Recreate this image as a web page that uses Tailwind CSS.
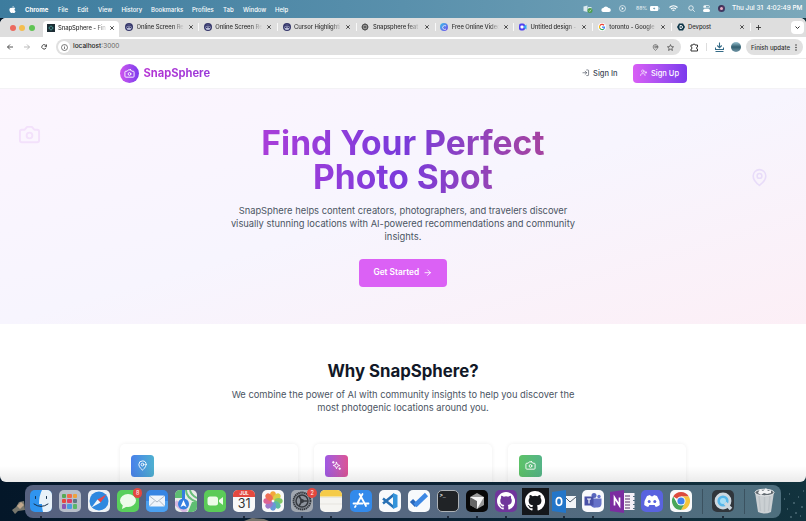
<!doctype html>
<html lang="en">
    <head>
        <meta charset="UTF-8" />
        <meta name="viewport" content="width=device-width, initial-scale=1.0" />
        <title>SnapSphere - Find Your Perfect Photo Spot</title>
        <script src="https://cdn.jsdelivr.net/npm/@tailwindcss/browser@4"></script>
    </head>

    <body class="flex h-screen w-screen flex-col overflow-hidden bg-linear-to-r from-[#041729] via-[#0a2033] to-[#12333e] font-['Inter',sans-serif]">
        <!-- Shared icons -->
        <svg class="hidden">
            <symbol id="camera" viewBox="0 0 24 24" fill="none" stroke="currentColor" stroke-width="2" stroke-linecap="round" stroke-linejoin="round">
                <path d="M14.5 4h-5L7 7H4a2 2 0 0 0-2 2v9a2 2 0 0 0 2 2h16a2 2 0 0 0 2-2V9a2 2 0 0 0-2-2h-3l-2.500-3z"></path>
                <circle cx="12" cy="13" r="3"></circle>
            </symbol>
            <symbol id="pin" viewBox="0 0 24 24" fill="none" stroke="currentColor" stroke-width="2" stroke-linecap="round" stroke-linejoin="round">
                <path d="M20 10c0 6-8 12-8 12s-8-6-8-12a8 8 0 0 1 16 0Z"></path>
                <circle cx="12" cy="10" r="3"></circle>
            </symbol>
            <symbol id="close" viewBox="0 0 8 8" fill="none" stroke="#333" stroke-width="1.700">
                <path d="m.5.5 7 7M7.500.5l-7 7"></path>
            </symbol>
            <symbol id="face" viewBox="0 0 16 16">
                <circle cx="8" cy="8" r="8" fill="#34366a"></circle>
                <path d="M3 7h10v2a5 5 0 0 1-10 0Z" fill="#b9bdd8"></path>
                <path d="M4 8h3v2H4zM9 8h3v2H9z" fill="#34366a"></path>
                <path d="M5 4h6" stroke="#8a8db8"></path>
            </symbol>
            <symbol id="octocat" viewBox="0 0 16 16">
                <path fill="#fff" d="M8 0C3.580 0 0 3.580 0 8c0 3.540 2.290 6.530 5.470 7.590.4.070.55-.17.55-.38v-1.490c-2.010.37-2.530-.49-2.690-.94-.09-.23-.48-.94-.82-1.130-.28-.15-.68-.52-.01-.53.63-.01 1.080.58 1.230.82.72 1.210 1.870.87 2.330.66.07-.52.28-.87.51-1.070-1.780-.2-3.640-.89-3.640-3.950 0-.87.31-1.590.82-2.150-.08-.2-.36-1.020.08-2.120 0 0 .67-.21 2.200.82a7.600 7.600 0 0 1 4 0c1.530-1.040 2.200-.82 2.200-.82.44 1.100.16 1.920.08 2.120.51.56.82 1.270.82 2.150 0 3.070-1.870 3.750-3.650 3.950.29.25.54.73.54 1.480v2.200c0 .21.15.46.55.38A8 8 0 0 0 8 0Z"></path>
            </symbol>
        </svg>

        <!-- Menu bar -->
        <div class="flex h-[18px] shrink-0 items-center bg-linear-to-r from-[#3d7c9e] via-[#5990ac] to-[#7ba8ba] pl-[9px] text-[6px] font-medium whitespace-nowrap text-white">
            <svg class="mr-[9px] h-[7px] w-[7px]" viewBox="0 0 16 18" fill="#fff">
                <path d="M11 0c.1 1.900-1.500 4-3.400 4C7.400 2.200 9 .2 11 0ZM8 5c.8 0 2-.9 3.600-.9 1.600 0 2.900.8 3.600 1.900-3.200 1.900-2.600 6.200.6 7.400C15 15.600 13.300 18 11.700 18c-1.400 0-1.900-.8-3.500-.8S6 18 4.700 18C2.600 18 0 13.500 0 9.900 0 6.300 2.300 4.200 4.600 4.200 6.100 4.200 7.200 5 8 5Z"></path>
            </svg>
            <span class="w-[33px] font-bold">Chrome</span>
            <span class="w-[19.500px]">File</span>
            <span class="w-[20.500px]">Edit</span>
            <span class="w-[23.500px]">View</span>
            <span class="w-[29.500px]">History</span>
            <span class="w-[41px]">Bookmarks</span>
            <span class="w-[31px]">Profiles</span>
            <span class="w-[20px]">Tab</span>
            <span class="w-[32px]">Window</span>
            <span>Help</span>
            <div class="mr-[8px] ml-auto flex items-center">
                <svg class="mr-[8px] h-[8px] w-[10px]" viewBox="0 0 20 16"><path d="M1 3 9 1v13L1 12ZM10 4h7v8h-7z" fill="#dce9ee"></path><circle cx="14" cy="11" r="5" fill="#4c9d4d"></circle><path d="m12 11 1.500 2 3-4" stroke="#fff" fill="none"></path></svg>
                <svg class="mr-[8px] h-[6px] w-[10px]" viewBox="0 0 20 12" fill="#fff"><path d="M5 12a4 4 0 0 1-.5-8A6 6 0 0 1 15 4a4 4 0 0 1 1 8Z"></path></svg>
                <svg class="mr-[10px] h-[7px] w-[7px]" viewBox="0 0 14 14"><circle cx="7" cy="7" r="6" fill="none" stroke="#fff" stroke-width="1.300"></circle><path d="m5.500 4 4 3-4 3z" fill="#fff"></path></svg>
                <span class="w-[14px] text-[5px] text-white/80">88%</span>
                <svg class="mr-[9px] h-[5px] w-[10px]" viewBox="0 0 24 12"><rect width="20" height="12" rx="3" fill="#fff"></rect><path d="M22 4v4" stroke="#cfe0e7" stroke-width="2"></path><path d="m11 2-4 5h3l-1 3 4-5h-3z" fill="#6c9db3"></path></svg>
                <svg class="mr-[10px] h-[7px] w-[9px]" viewBox="0 0 18 14" fill="none" stroke="#fff" stroke-width="2.400"><path d="M1 5a12 12 0 0 1 16 0M4 8a8 8 0 0 1 10 0M7 11q2-1.500 4 0"></path></svg>
                <svg class="mr-[8px] h-[7px] w-[7px]" viewBox="0 0 14 14" fill="none" stroke="#fff" stroke-width="1.500"><circle cx="6" cy="6" r="4.500"></circle><path d="m9.500 9.500 4 4"></path></svg>
                <svg class="mr-[8px] h-[7px] w-[7px]" viewBox="0 0 14 14"><rect x="1" y="1" width="12" height="5" rx="2.500" fill="none" stroke="#fff" stroke-width="1.300"></rect><rect y="8" width="14" height="6" rx="3" fill="#fff"></rect><circle cx="4" cy="3.500" r="2" fill="#fff"></circle></svg>
                <span class="mr-[7px] flex h-[7px] w-[7px] items-center justify-center rounded-full bg-linear-to-br from-[#20284a] via-[#52355e] to-[#233b65]"><span class="h-[3px] w-[3px] rounded-full bg-[#e7adc3]"></span></span>
                <span class="w-[66px] text-[6.400px]">Thu Jul 31&nbsp; 4:02:49 PM</span>
            </div>
        </div>

        <!-- Browser window -->
        <div class="relative flex h-[464px] shrink-0 flex-col overflow-hidden rounded-[6px] bg-white">
            <!-- Tabs -->
            <div class="flex h-[19px] shrink-0 items-center bg-[#dedede] text-[5.900px] font-medium tracking-[-0.06px] whitespace-nowrap text-[#333]">
                <div class="flex w-[43px] shrink-0 gap-[3.500px] pl-[9.500px]">
                    <span class="h-[6px] w-[6px] rounded-full bg-[#ec6a5f]"></span>
                    <span class="h-[6px] w-[6px] rounded-full bg-[#f4be4f]"></span>
                    <span class="h-[6px] w-[6px] rounded-full bg-[#5fc454]"></span>
                </div>
                <div class="mt-[3px] flex h-[16px] w-[76px] shrink-0 items-center rounded-t-[4px] bg-white pb-[2px] pl-[3.500px]">
                    <span class="mr-[3.500px] flex h-[8px] w-[8px] items-center justify-center bg-[#1d2d35]"><span class="h-[4px] w-[4px] rotate-45 border border-[#3f8785]"></span></span>
                    <span class="w-[50px] mask-r-from-75%">SnapSphere - Fin</span>
                    <svg class="ml-[1.500px] h-[4px] w-[4px]"><use href="#close"></use></svg>
                </div>
                <div class="flex w-[80.300px] shrink-0 items-center pl-[6px]">
                    <svg class="mr-[3.500px] h-[8px] w-[8px]"><use href="#face"></use></svg>
                    <span class="w-[47px] mask-r-from-75%">Online Screen Re</span>
                    <svg class="ml-[5px] h-[4px] w-[4px]"><use href="#close"></use></svg>
                    <span class="ml-auto h-[8px] w-px bg-[#f8f8f8]"></span>
                </div>
                <div class="flex w-[78.800px] shrink-0 items-center pl-[4.500px]">
                    <svg class="mr-[3.500px] h-[8px] w-[8px]"><use href="#face"></use></svg>
                    <span class="w-[47px] mask-r-from-75%">Online Screen Re</span>
                    <svg class="ml-[5px] h-[4px] w-[4px]"><use href="#close"></use></svg>
                    <span class="ml-auto h-[8px] w-px bg-[#f8f8f8]"></span>
                </div>
                <div class="flex w-[78.800px] shrink-0 items-center pl-[4.500px]">
                    <svg class="mr-[3.500px] h-[8px] w-[8px]"><use href="#face"></use></svg>
                    <span class="w-[47px] mask-r-from-80%">Cursor Highlighti</span>
                    <svg class="ml-[5px] h-[4px] w-[4px]"><use href="#close"></use></svg>
                    <span class="ml-auto h-[8px] w-px bg-[#f8f8f8]"></span>
                </div>
                <div class="flex w-[78.800px] shrink-0 items-center pl-[4.500px]">
                    <svg class="mr-[3.500px] h-[8px] w-[8px]" viewBox="0 0 16 16" fill="none" stroke="#555" stroke-width="2"><circle cx="8" cy="8" r="6"></circle><path d="m8 2 5 3v6l-5 3-5-3V5zM3 5l10 6M13 5 3 11M8 2v12"></path></svg>
                    <span class="w-[47px] mask-r-from-75%">Snapsphere feat</span>
                    <svg class="ml-[5px] h-[4px] w-[4px]"><use href="#close"></use></svg>
                    <span class="ml-auto h-[8px] w-px bg-[#f8f8f8]"></span>
                </div>
                <div class="flex w-[78.800px] shrink-0 items-center pl-[4.500px]">
                    <span class="mr-[3.500px] flex h-[8px] w-[8px] items-center justify-center rounded-full bg-linear-to-br from-[#21bfe8] to-[#6a3de8]"><svg class="h-[5px] w-[5px]" viewBox="0 0 10 10" fill="none" stroke="#fff" stroke-width="1.500"><path d="M8 2a4 4 0 1 0 0 6"></path></svg></span>
                    <span class="w-[47px] mask-r-from-80%">Free Online Video</span>
                    <svg class="ml-[5px] h-[4px] w-[4px]"><use href="#close"></use></svg>
                    <span class="ml-auto h-[8px] w-px bg-[#f8f8f8]"></span>
                </div>
                <div class="flex w-[78.800px] shrink-0 items-center pl-[4.500px]">
                    <svg class="mr-[3.500px] h-[8px] w-[8px]" viewBox="0 0 16 16"><rect y="1" width="12" height="14" rx="4" fill="#5140ee"></rect><path d="m9 7 6-4v10L9 9Z" fill="#32a8f2"></path><rect x="3" y="5" width="6" height="6" rx="2" fill="#fff"></rect></svg>
                    <span class="w-[47px] mask-r-from-80%">Untitled design -</span>
                    <svg class="ml-[5px] h-[4px] w-[4px]"><use href="#close"></use></svg>
                    <span class="ml-auto h-[8px] w-px bg-[#f8f8f8]"></span>
                </div>
                <div class="flex w-[78.800px] shrink-0 items-center pl-[4.500px]">
                    <svg class="mr-[3.500px] h-[8px] w-[8px]" viewBox="0 0 16 16" fill="none" stroke-width="2.500"><circle cx="8" cy="8" r="8" fill="#fff"></circle><path d="M12 4.500a5 5 0 0 0-8.300 1" stroke="#ea4335"></path><path d="M3.700 5.500a5 5 0 0 0 0 5" stroke="#fbbc05"></path><path d="M3.700 10.500a5 5 0 0 0 7.800 1.200" stroke="#34a853"></path><path d="M11.500 11.700A5 5 0 0 0 13 8H8" stroke="#4285f4"></path></svg>
                    <span class="w-[47px] mask-r-from-80%">toronto - Google</span>
                    <svg class="ml-[5px] h-[4px] w-[4px]"><use href="#close"></use></svg>
                    <span class="ml-auto h-[8px] w-px bg-[#f8f8f8]"></span>
                </div>
                <div class="flex w-[78.800px] shrink-0 items-center pl-[4.500px]">
                    <svg class="mr-[3.500px] h-[8px] w-[8px]" viewBox="0 0 16 16"><path d="M4 1h8l4 7-4 7H4L0 8Z" fill="#0b3447"></path><path d="M6 5h2a3 3 0 0 1 0 6H6Z" fill="none" stroke="#fff" stroke-width="1.800"></path></svg>
                    <span class="w-[47px]">Devpost</span>
                    <svg class="ml-[5px] h-[4px] w-[4px]"><use href="#close"></use></svg>
                    <span class="ml-auto h-[8px] w-px bg-[#f8f8f8]"></span>
                </div>
                <svg class="ml-[5px] h-[5px] w-[5px] shrink-0" viewBox="0 0 10 10" stroke="#333" stroke-width="1.800"><path d="M5 0v10M0 5h10"></path></svg>
                <span class="mr-[2.500px] ml-auto flex h-[13px] w-[13px] shrink-0 items-center justify-center rounded-[4px] bg-white">
                    <svg class="h-[3px] w-[5px]" viewBox="0 0 10 6" fill="none" stroke="#333" stroke-width="2"><path d="m1 1 4 4 4-4"></path></svg>
                </span>
            </div>

            <!-- Toolbar -->
            <div class="flex h-[21.500px] shrink-0 items-center border-b border-[#ececec] bg-white pr-[3px] pl-[7px]">
                <svg class="h-[6px] w-[6px]" viewBox="0 0 12 12" fill="none" stroke="#444" stroke-width="1.800"><path d="M12 6H1M6 1 1 6l5 5"></path></svg>
                <svg class="ml-[11px] h-[6px] w-[6px]" viewBox="0 0 12 12" fill="none" stroke="#aaa" stroke-width="1.600"><path d="M0 6h11M6 1l5 5-5 5"></path></svg>
                <svg class="ml-[11px] h-[6px] w-[6px]" viewBox="0 0 14 14" fill="none" stroke="#333" stroke-width="2"><path d="M12 8.500A5.200 5.200 0 1 1 10.800 3L13 5M13 1v4.500H8.500"></path></svg>
                <div class="ml-[9px] flex h-[16px] w-[625px] items-center rounded-full bg-[#e0e0e0] pr-[7px] pl-[2px]">
                    <span class="flex h-[12px] w-[12px] items-center justify-center rounded-full bg-white">
                        <svg class="h-[7px] w-[7px]" viewBox="0 0 14 14" fill="none" stroke="#444" stroke-width="1.400"><circle cx="7" cy="7" r="6"></circle><path d="M7 6v4M7 3.500V5"></path></svg>
                    </span>
                    <span class="ml-[3px] text-[6.500px] font-medium text-[#222]">localhost<span class="font-normal text-[#666]">:3000</span></span>
                    <svg class="ml-auto h-[7px] w-[7px] text-[#444]"><use href="#pin"></use></svg>
                    <svg class="ml-[8px] h-[7px] w-[7px]" viewBox="0 0 24 24" fill="none" stroke="#444" stroke-width="2.500"><path d="m12 2 3 7 7.500.6-5.700 5 1.800 7.400L12 18l-6.600 4 1.800-7.400-5.700-5L9 9Z"></path></svg>
                </div>
                <svg class="ml-[9px] h-[9px] w-[9px]" viewBox="0 0 18 18" fill="none" stroke="#333" stroke-width="2"><path d="M2 4h4a2 2 0 1 1 4 0h5v4a2 2 0 1 0 0 4v4H2v-4a2 2 0 1 0 0-4Z"></path></svg>
                <span class="ml-[7px] h-[8px] w-px bg-[#ddd]"></span>
                <svg class="ml-[7.500px] h-[10px] w-[9px]" viewBox="0 0 18 20" fill="none" stroke="#356b87" stroke-width="2.200"><path d="M9 1v10M4.500 7 9 11.500 13.500 7M1 11v4h16v-4M1 19h16"></path></svg>
                <span class="ml-[7px] h-[10px] w-[10px] rounded-full bg-linear-to-b from-[#9cc4d2] via-[#315f70] to-[#7498a8]"></span>
                <div class="ml-auto flex h-[16px] w-[57px] items-center rounded-full bg-[#e0e0e0] pl-[5px] text-[6.100px] font-medium whitespace-nowrap text-[#333]">
                    Finish update
                    <svg class="mr-[6px] ml-auto h-[7px] w-[2px]" viewBox="0 0 4 14" fill="#333"><circle cx="2" cy="2" r="1.500"></circle><circle cx="2" cy="7" r="1.500"></circle><circle cx="2" cy="12" r="1.500"></circle></svg>
                </div>
            </div>

            <!-- Site header -->
            <header class="flex h-[30px] shrink-0 items-center border-b border-[#f3f2f5] bg-white px-[119.500px]">
                <span class="flex h-[19px] w-[19px] items-center justify-center rounded-full bg-linear-to-r from-[#cf55ee] to-[#7c3aed] text-white">
                    <svg class="h-[11px] w-[11px]"><use href="#camera"></use></svg>
                </span>
                <span class="ml-[5px] bg-linear-to-r from-[#b534d4] to-[#9938d8] bg-clip-text pt-px text-[11.150px] font-bold text-transparent">SnapSphere</span>
                <div class="ml-auto flex items-center text-[7.500px] font-medium text-[#414857]">
                    <svg class="mr-[3.500px] h-[7.500px] w-[7.500px]" viewBox="0 0 24 24" fill="none" stroke="currentColor" stroke-width="2" stroke-linecap="round" stroke-linejoin="round"><path d="M15 3h4a2 2 0 0 1 2 2v14a2 2 0 0 1-2 2h-4M10 17l5-5-5-5M15 12H3"></path></svg>
                    <span class="pt-px">Sign In</span>
                    <button class="ml-[15px] flex h-[19px] w-[54px] items-center justify-center rounded-[4px] bg-linear-to-r from-[#d95ef5] to-[#7c3aed] whitespace-nowrap text-white">
                        <svg class="mr-[3.500px] h-[7.500px] w-[7.500px]" viewBox="0 0 24 24" fill="none" stroke="currentColor" stroke-width="2" stroke-linecap="round" stroke-linejoin="round"><circle cx="9" cy="7" r="4"></circle><path d="M16 21v-2a4 4 0 0 0-4-4H6a4 4 0 0 0-4 4v2M19 8v6M22 11h-6"></path></svg>
                        <span class="pt-px">Sign Up</span>
                    </button>
                </div>
            </header>

            <!-- Hero -->
            <section class="relative flex h-[235px] shrink-0 flex-col items-center bg-linear-to-br from-[#fcf5fe] via-[#f7f5fe] to-[#fceff6] pt-[37.500px] text-center">
                <svg class="absolute top-[34px] left-[18px] h-[23px] w-[23px] text-[#f3e1fb]"><use href="#camera"></use></svg>
                <svg class="absolute top-[79px] right-[37px] h-[19px] w-[19px] text-[#e8dcf9]"><use href="#pin"></use></svg>
                <h1 class="w-[420px] bg-linear-to-r from-[#c03bd8] via-[#7a3adb] to-[#bb3c82] bg-clip-text text-[33.600px] leading-[33.700px] font-bold text-transparent">Find Your Perfect<br />Photo Spot</h1>
                <p class="mt-[10.500px] text-[9.330px] leading-[13.200px] whitespace-nowrap text-[#4b5563]">SnapSphere helps content creators, photographers, and travelers discover<br />visually stunning locations with AI-powered recommendations and community<br />insights.</p>
                <button class="mt-[15px] flex h-[28px] w-[88px] items-center justify-center rounded-[4px] bg-[#db61f5] text-[8.300px] font-semibold whitespace-nowrap text-white">
                    Get Started
                    <svg class="ml-[4px] h-[9.400px] w-[9.400px]" viewBox="0 0 24 24" fill="none" stroke="currentColor" stroke-width="2.200" stroke-linecap="round" stroke-linejoin="round"><path d="M5 12h14M12 5l7 7-7 7"></path></svg>
                </button>
            </section>

            <!-- Features -->
            <section class="flex flex-1 flex-col items-center pt-[38px] text-center">
                <h2 class="text-[16.800px] leading-[19px] font-bold text-[#111827]">Why SnapSphere?</h2>
                <p class="mt-[7px] text-[9.330px] leading-[13.100px] whitespace-nowrap text-[#4b5563]">We combine the power of AI with community insights to help you discover the<br />most photogenic locations around you.</p>
                <div class="mt-[30px] grid w-[566px] grid-cols-3 gap-[16px]">
                    <div class="h-[60px] rounded-[5px] bg-white p-[11px] shadow-[0_0_4px_#00000012]">
                        <span class="flex h-[22.500px] w-[22.500px] items-center justify-center rounded-[3.500px] bg-linear-to-r from-[#4a80ea] to-[#4fb0d0] text-white"><svg class="h-[11px] w-[11px]"><use href="#pin"></use></svg></span>
                    </div>
                    <div class="h-[60px] rounded-[5px] bg-white p-[11px] shadow-[0_0_4px_#00000012]">
                        <span class="flex h-[22.500px] w-[22.500px] items-center justify-center rounded-[3.500px] bg-linear-to-r from-[#9f58e3] to-[#dc5294] text-white"><svg class="h-[11px] w-[11px]" viewBox="0 0 24 24" fill="none" stroke="currentColor" stroke-width="2" stroke-linejoin="round" stroke-linecap="round"><path d="m12 5 2 5 5 2-5 2-2 5-2-5-5-2 5-2ZM5 3v4M3 5h4M19 17v4M17 19h4"></path></svg></span>
                    </div>
                    <div class="h-[60px] rounded-[5px] bg-white p-[11px] shadow-[0_0_4px_#00000012]">
                        <span class="flex h-[22.500px] w-[22.500px] items-center justify-center rounded-[3.500px] bg-linear-to-r from-[#5dc267] to-[#55b487] text-white"><svg class="h-[11px] w-[11px]"><use href="#camera"></use></svg></span>
                    </div>
                </div>
            </section>
            <div class="pointer-events-none absolute inset-x-0 bottom-0 h-[16px] bg-linear-to-b from-transparent to-black/8"></div>
        </div>

        <!-- Dock, with the wallpaper showing at both ends -->
        <div class="relative flex flex-1 items-start pt-[2.500px]">
            <svg class="absolute inset-0 h-full w-full" viewBox="0 0 806 39">
                <path d="m12 28 4-3 3-5 5-1 1 9-7 1-3 3Z" fill="#77766c"></path>
                <path d="m17 24 4-4 3 3-4 4Z" fill="#c0a78c"></path>
                <path d="m244 39 8-3 12 1 5 2Z" fill="#76746c"></path>
                <path d="M784 17h1M789 12h1M793 21h2M798 15h1M801 25h2M787 27h1M795 31h2M790 35h2M803 9h1M800 34h1" stroke="#688590" stroke-width="1"></path>
            </svg>
            <div class="relative ml-[25px] flex h-[33.500px] w-[756px] shrink-0 items-center rounded-[8px] bg-linear-to-r from-[#56617f] via-[#566881] to-[#4e6f7e] pl-px">
                <div class="relative flex w-[29.100px] justify-center">
                    <svg class="h-[22px] w-[22px] rounded-[5px]" viewBox="0 0 22 22"><path fill="#2f94ef" d="M0 0h22v22H0z"></path><path fill="#e8f1f9" d="M12 0h10v22h-9q-1-4-1-8H9Q9 6 12 0Z"></path><path d="M5.500 6.500v2M16.500 6.500v2M4 14q7 5 14 0" fill="none" stroke="#16304d" stroke-linecap="round"></path></svg>
                    <span class="absolute -bottom-[5.500px] h-[2px] w-[2px] rounded-full bg-[#111827]"></span>
                </div>
                <div class="flex w-[29.100px] justify-center">
                    <div class="grid h-[22px] w-[22px] grid-cols-3 gap-[1px] rounded-[5px] bg-[#b8bfcb] p-[3.500px]">
                        <i class="rounded-[1px] bg-[#57a955]"></i><i class="rounded-[1px] bg-[#ef6b4b]"></i><i class="rounded-[1px] bg-[#eda23c]"></i>
                        <i class="rounded-[1px] bg-[#e7483d]"></i><i class="rounded-[1px] bg-[#dc3f68]"></i><i class="rounded-[1px] bg-[#5f7687]"></i>
                        <i class="rounded-[1px] bg-[#8b55b5]"></i><i class="rounded-[1px] bg-[#4c9be2]"></i><i class="rounded-[1px] bg-[#5ab769]"></i>
                    </div>
                </div>
                <div class="flex w-[29.100px] justify-center">
                    <svg class="h-[22px] w-[22px] rounded-[5px]" viewBox="0 0 22 22"><path fill="#eef1f5" d="M0 0h22v22H0z"></path><circle cx="11" cy="11" r="9.500" fill="#2f88df"></circle><path fill="#e5484d" d="M18.500 4.500 9.500 9.500l3 3Z"></path><path fill="#f1f5f9" d="m3.500 17.500 6-8 3 3Z"></path></svg>
                </div>
                <div class="relative flex w-[29.100px] justify-center">
                    <svg class="h-[22px] w-[22px] rounded-[5px]" viewBox="0 0 22 22"><path fill="#59cf5b" d="M0 0h22v22H0z"></path><ellipse cx="11" cy="10.500" rx="8" ry="6.500" fill="#eefbea"></ellipse><path fill="#eefbea" d="m6 14-1 5 6-3Z"></path></svg>
                    <span class="absolute -top-[2px] right-0 flex h-[9.500px] w-[9.500px] items-center justify-center rounded-full bg-[#e5483f] text-[5.500px] text-white">8</span>
                </div>
                <div class="flex w-[29.100px] justify-center">
                    <svg class="h-[22px] w-[22px] rounded-[5px]" viewBox="0 0 22 22"><path fill="#3685e3" d="M0 0h22v22H0z"></path><path fill="#4ba0f0" d="M0 11h22v11H0z"></path><rect x="3" y="5.500" width="16" height="11" rx="1.500" fill="#eef4fb"></rect><path d="m3.500 6 7.500 6 7.500-6M3.500 16l5-5M18.500 16l-5-5" fill="none" stroke="#9aa8b8" stroke-width=".8"></path></svg>
                </div>
                <div class="flex w-[29.100px] justify-center">
                    <svg class="h-[22px] w-[22px] rounded-[5px]" viewBox="0 0 22 22"><path fill="#e9ece9" d="M0 0h22v22H0z"></path><path fill="#5ebd72" d="M0 0h9v8H0zM17 12h5v10h-9z"></path><path d="M11 0q0 8 11 12M15 0q1 5 7 8" fill="none" stroke="#68bf7a" stroke-width="2"></path><path d="m0 12 11 10" stroke="#d6b7df" stroke-width="5"></path><circle cx="8.500" cy="14" r="5.500" fill="#347fe0"></circle><path fill="#fff" d="m8.500 10 3 7-3-1.500-3 1.500Z"></path><path stroke="#347fe0" stroke-width="3" d="M8.500 0v9"></path></svg>
                </div>
                <div class="flex w-[29.100px] justify-center">
                    <svg class="h-[22px] w-[22px] rounded-[5px]" viewBox="0 0 22 22"><path fill="#5bcb58" d="M0 0h22v22H0z"></path><rect x="3.500" y="6.500" width="10.500" height="9" rx="2.500" fill="#edfbe9"></rect><path fill="#edfbe9" d="m15 10 4-3v8l-4-3Z"></path></svg>
                </div>
                <div class="relative flex w-[29.100px] justify-center">
                    <div class="flex h-[22px] w-[22px] flex-col items-center overflow-hidden rounded-[5px] bg-[#f8f8f8]">
                        <span class="h-[7px] w-full bg-[#e4493f] text-center text-[5px] leading-[7px] font-semibold text-white">JUL</span>
                        <span class="text-[12.500px] leading-[14px] text-[#333]">31</span>
                    </div>
                    <span class="absolute -bottom-[5.500px] h-[2px] w-[2px] rounded-full bg-[#111827]"></span>
                </div>
                <div class="flex w-[29.100px] justify-center">
                    <svg class="h-[22px] w-[22px] rounded-[5px]" viewBox="-11 -11 22 22"><path fill="#f8f8f8" d="M-11-11h22v22h-22z"></path><g opacity=".95"><ellipse cy="-5.500" rx="3" ry="4.200" fill="#f3a32f"></ellipse><ellipse cy="-5.500" rx="3" ry="4.200" fill="#d7ce3d" transform="rotate(45)"></ellipse><ellipse cy="-5.500" rx="3" ry="4.200" fill="#7cc65d" transform="rotate(90)"></ellipse><ellipse cy="-5.500" rx="3" ry="4.200" fill="#56b89b" transform="rotate(135)"></ellipse><ellipse cy="-5.500" rx="3" ry="4.200" fill="#6093d6" transform="rotate(180)"></ellipse><ellipse cy="-5.500" rx="3" ry="4.200" fill="#9a72c7" transform="rotate(225)"></ellipse><ellipse cy="-5.500" rx="3" ry="4.200" fill="#db5b90" transform="rotate(270)"></ellipse><ellipse cy="-5.500" rx="3" ry="4.200" fill="#ee674c" transform="rotate(315)"></ellipse></g></svg>
                </div>
                <div class="relative flex w-[29.100px] justify-center">
                    <svg class="h-[22px] w-[22px] rounded-[5px]" viewBox="-11 -11 22 22"><path fill="#a1a7b0" d="M-11-11h22v22h-22z"></path><circle r="8.500" fill="#8a9099" stroke="#34383e" stroke-width="1.800" stroke-dasharray="1.500 .5"></circle><circle r="6" fill="none" stroke="#34383e" stroke-width="1.500"></circle><path d="M0 0h6M0 0l-3-5M0 0l-3 5" stroke="#34383e" stroke-width="1.500"></path><circle r="2" fill="#34383e"></circle></svg>
                    <span class="absolute -top-[2px] right-0 flex h-[9.500px] w-[9.500px] items-center justify-center rounded-full bg-[#e5483f] text-[5.500px] text-white">2</span>
                    <span class="absolute -bottom-[5.500px] h-[2px] w-[2px] rounded-full bg-[#111827]"></span>
                </div>
                <div class="relative flex w-[29.100px] justify-center">
                    <svg class="h-[22px] w-[22px] rounded-[5px]" viewBox="0 0 22 22"><path fill="#f5f4f1" d="M0 0h22v22H0z"></path><path fill="#f5cb49" d="M0 0h22v6.500H0z"></path><path d="M0 7.500h22M0 14h22" stroke="#dcdad3" stroke-width=".6"></path></svg>
                    <span class="absolute -bottom-[5.500px] h-[2px] w-[2px] rounded-full bg-[#111827]"></span>
                </div>
                <div class="flex w-[29.100px] justify-center">
                    <svg class="h-[22px] w-[22px] rounded-[5px]" viewBox="0 0 22 22"><path fill="#338aeb" d="M0 0h22v22H0z"></path><path d="M12.500 4 7 14M9.500 4l6.500 12M3.500 13.500h9M15 13.500h3.500M5.700 16l-.7 1" fill="none" stroke="#fff" stroke-width="1.800" stroke-linecap="round"></path></svg>
                </div>
                <div class="flex w-[29.100px] justify-center">
                    <svg class="h-[22px] w-[22px] rounded-[5px]" viewBox="0 0 22 22"><path fill="#f8fafc" d="M0 0h22v22H0z"></path><path d="M15 4.500 4 13.500M15 17.500 4 8.500" stroke="#2670b5" stroke-width="2.500"></path><path fill="#3394db" d="m14 3 4.500 2v12L14 19Z"></path></svg>
                </div>
                <div class="flex w-[29.100px] justify-center">
                    <svg class="h-[22px] w-[22px] rounded-[5px]" viewBox="0 0 22 22"><path fill="#f8fafc" d="M0 0h22v22H0z"></path><path d="m3.500 10.500 5 5" stroke="#2868bd" stroke-width="4.500"></path><path d="M7 15.500 18.500 4.500" stroke="#3d88e4" stroke-width="4.500"></path></svg>
                </div>
                <div class="relative flex w-[29.100px] justify-center">
                    <div class="h-[22px] w-[22px] rounded-[5px] border border-[#aeb3b8] bg-[#202326] pt-[2px] pl-[2px] font-['Liberation_Mono',monospace] text-[5px] leading-[6px] font-bold text-white">&gt;_</div>
                    <span class="absolute -bottom-[5.500px] h-[2px] w-[2px] rounded-full bg-[#111827]"></span>
                </div>
                <div class="relative flex w-[29.100px] justify-center">
                    <svg class="h-[22px] w-[22px] rounded-[5px]" viewBox="0 0 22 22"><path fill="#080808" d="M0 0h22v22H0z"></path><path fill="#999" d="m11 3 7 4v8l-7 4-7-4V7Z"></path><path fill="#666" d="m4 7 7 4v8l-7-4Z"></path><path fill="#f4f4f4" d="M4 7h14l-7 12v-8Z"></path></svg>
                    <span class="absolute -bottom-[5.500px] h-[2px] w-[2px] rounded-full bg-[#111827]"></span>
                </div>
                <div class="relative flex w-[29.100px] justify-center">
                    <span class="flex h-[22px] w-[22px] items-center justify-center rounded-[5px] bg-[#70369b]"><svg class="h-[18px] w-[18px]"><use href="#octocat"></use></svg></span>
                    <span class="absolute -bottom-[5.500px] h-[2px] w-[2px] rounded-full bg-[#111827]"></span>
                </div>
                <div class="flex w-[29.100px] justify-center">
                    <span class="flex h-[27px] w-[27px] shrink-0 items-center justify-center bg-[#14171b]"><svg class="h-[20px] w-[20px]"><use href="#octocat"></use></svg></span>
                </div>
                <div class="relative flex w-[29.100px] justify-center">
                    <svg class="h-[23px] w-[25px]" viewBox="0 0 25 23"><path fill="#f2f5f8" d="M12 6h12v12H12z"></path><path d="m13 7 5 5 6-5" fill="none" stroke="#4c5968"></path><path fill="#2376c9" d="m0 2 14-2v23L0 21Z"></path><ellipse cx="7" cy="11.500" rx="2.700" ry="3.800" fill="none" stroke="#fff" stroke-width="1.700"></ellipse></svg>
                    <span class="absolute -bottom-[5px] h-[2px] w-[2px] rounded-full bg-[#111827]"></span>
                </div>
                <div class="relative flex w-[29.100px] justify-center">
                    <svg class="h-[22px] w-[22px] rounded-[5px]" viewBox="0 0 22 22"><path fill="#f8f9fc" d="M0 0h22v22H0z"></path><circle cx="12" cy="5.500" r="2.500" fill="#5866be"></circle><circle cx="17" cy="6.500" r="1.700" fill="#6673cf"></circle><path fill="#6571c8" d="M8 8.500h11.500V14a4 4 0 0 1-4 3.500H14A5 5 0 0 1 8 14Z"></path><path fill="#4851a8" d="M2.500 6.500h9v9h-9z"></path><path d="M5 9h4M7 9v4.500" stroke="#fff" stroke-width="1.200"></path></svg>
                    <span class="absolute -bottom-[5.500px] h-[2px] w-[2px] rounded-full bg-[#111827]"></span>
                </div>
                <div class="flex w-[29.100px] justify-center">
                    <svg class="h-[23px] w-[25px]" viewBox="0 0 25 23"><path fill="#f4f0f7" d="M13 3h10v17H13z"></path><path d="M15 6h5M15 9h5M15 12h5M15 15h5M15 18h5" stroke="#543064"></path><path d="M23 3v17" stroke="#f4f0f7" stroke-width="3" stroke-dasharray="3 1"></path><path fill="#7b2da0" d="m0 2 14-2v23L0 21Z"></path><path d="M4.500 15.500v-8l5 8v-8" fill="none" stroke="#fff" stroke-width="1.700"></path></svg>
                </div>
                <div class="flex w-[29.100px] justify-center">
                    <svg class="h-[22px] w-[22px] rounded-[5px]" viewBox="0 0 22 22"><path fill="#5963df" d="M0 0h22v22H0z"></path><path fill="#fff" d="M6 6 9 5l1 1.300h2L13 5l3 1q3 4.500 2.800 9-2 1.500-4 2L13.600 15H8.400l-1.200 2q-2-.5-4-2Q3 10.500 6 6Z"></path><circle cx="8.200" cy="11.500" r="1.500" fill="#5963df"></circle><circle cx="13.800" cy="11.500" r="1.500" fill="#5963df"></circle></svg>
                </div>
                <div class="relative flex w-[29.100px] justify-center">
                    <svg class="h-[22px] w-[22px] rounded-[5px]" viewBox="-11 -11 22 22"><path fill="#f8f9fa" d="M-11-11h22v22h-22z"></path><path fill="#dc4b3e" d="M0 0-7.800-4.500A9 9 0 0 1 7.800-4.500H0Z"></path><path fill="#f4c53d" d="M0-4.500h7.800A9 9 0 0 1 0 9L3.900 2.200Z"></path><path fill="#4aa65a" d="M-7.800-4.500A9 9 0 0 0 0 9L3.900 2.200H-3.900Z"></path><circle r="4.500" fill="#fff"></circle><circle r="3.600" fill="#4283ed"></circle></svg>
                    <span class="absolute -bottom-[5.500px] h-[2px] w-[2px] rounded-full bg-[#111827]"></span>
                </div>
                <span class="ml-[6.500px] h-[25px] w-px bg-[#3b5260]"></span>
                <div class="relative ml-[6px] flex w-[29.100px] justify-center">
                    <svg class="h-[22px] w-[22px] rounded-[5px]" viewBox="-11 -11 22 22"><path fill="#30363c" d="M-11-11h22v22h-22z"></path><circle r="7" fill="#57b7ea" stroke="#cdd8e0" stroke-width="2.800"></circle><circle r="3" fill="#a6def6"></circle><path d="m2 2 6 6" stroke="#cdd8e0" stroke-width="3.500"></path></svg>
                    <span class="absolute -bottom-[5.500px] h-[2px] w-[2px] rounded-full bg-[#111827]"></span>
                </div>
                <span class="ml-[6px] h-[25px] w-px bg-[#3b5260]"></span>
                <div class="ml-[5.500px] flex w-[29.100px] justify-center">
                    <svg class="h-[26px] w-[21px]" viewBox="0 0 21 26"><path fill="#cbd0d3" d="M1 4h19l-3 20q-6.500 3-13 0Z"></path><path d="m5 8 1.500 15M10.500 9v15M16 8l-1.500 15" stroke="#bdc3c7" stroke-width="1.500"></path><ellipse cx="10.500" cy="4.500" rx="9.500" ry="3.300" fill="#626a70" stroke="#e6e9eb"></ellipse><path fill="#f3f4f5" d="m4 5 2-4 3 2 3-3 2 3 3-1v3l-4 1-3-1-3 2Z"></path></svg>
                </div>
            </div>
        </div>
    </body>
</html>
